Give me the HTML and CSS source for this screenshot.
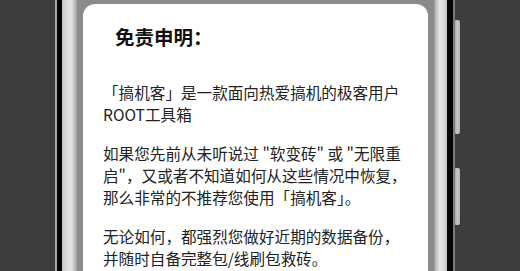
FILE: index.html
```html
<!DOCTYPE html>
<html lang="zh-CN">
<head>
<meta charset="utf-8">
<title>免责申明</title>
<link rel="stylesheet" href="styles.css">
</head>
<body>
<div class="scene">
  <div class="edge-l"></div>
  <div class="rim-l"></div>
  <div class="bezel-l"></div>
  <div class="screen">
    <div class="card">
      <h1 class="title">免责申明：</h1>
      <p class="para">「搞机客」是一款面向热爱搞机的极客用户<br>ROOT工具箱</p>
      <p class="para">如果您先前从未听说过 "软变砖" 或 "无限重<br>启"，又或者不知道如何从这些情况中恢复，<br>那么非常的不推荐您使用「搞机客」。</p>
      <p class="para">无论如何，都强烈您做好近期的数据备份，<br>并随时自备完整包/线刷包救砖。</p>
    </div>
  </div>
  <div class="bezel-r"></div>
  <div class="rim-r"></div>
  <div class="edge-r"></div>
  <div class="buttons">
    <div class="btn btn-power"></div>
    <div class="btn btn-vol"></div>
  </div>
</div>
</body>
</html>
```
FILE: styles.css
```css
html, body {
  margin: 0;
  padding: 0;
}
body {
  width: 520px;
  height: 271px;
  overflow: hidden;
  background: #3d3d3d;
  font-family: "Noto Sans CJK SC", "Noto Sans", sans-serif;
}
.scene {
  display: flex;
  height: 271px;
  padding-left: 55px;
}
.edge-l { width: 2px; background: #a8a8a8; }
.rim-l { width: 5px; background: #050505; }
.bezel-l {
  width: 15px;
  background: linear-gradient(to right, #c4c4c4 0%, #dcdcdc 30%, #e4e4e4 60%, #bdbdbd 85%, #9a9a9a 100%);
}
.screen {
  width: 345px;
  padding: 4px 6px 0;
  background: #8b8b8b;
  display: flex;
  flex-direction: column;
}
.card {
  flex: 1;
  background: #ffffff;
  border-radius: 12px 12px 0 0;
  padding: 18px 20px 0;
  color: #222;
}
.title {
  margin: 0 0 0 12px;
  font-size: 19.5px;
  line-height: 30px;
  font-weight: bold;
  color: #111;
}
.para {
  margin: 17px 0 0;
  font-size: 15.6px;
  line-height: 22px;
  white-space: nowrap;
}
.title + .para { margin-top: 29px; }
.bezel-r {
  width: 13px;
  background: linear-gradient(to left, #c4c4c4 0%, #dcdcdc 30%, #e4e4e4 60%, #bdbdbd 85%, #9a9a9a 100%);
}
.rim-r { width: 6px; background: #050505; }
.edge-r { width: 2px; background: #7a7a7a; }
.buttons {
  display: flex;
  flex-direction: column;
  padding-top: 20px;
}
.btn {
  width: 5px;
  background: linear-gradient(to right, #a9a9a9, #c8c8c8 50%, #b0b0b0);
  border-radius: 1px 2px 2px 1px;
}
.btn-power { height: 114px; }
.btn-vol { height: 57px; margin-top: 34px; }
```
